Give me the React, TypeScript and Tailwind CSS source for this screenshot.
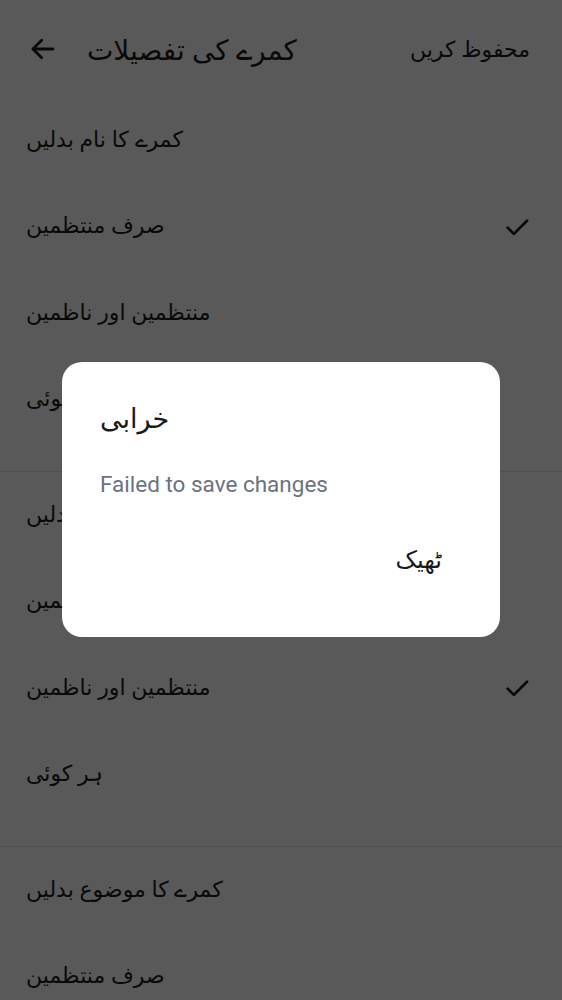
import React from 'react';

const urdu = { fontFamily: '"Noto Sans", "DejaVu Sans", sans-serif' };

interface OptionRowProps {
  label: string;
  checked?: boolean;
}

const Check = () => (
  <svg width="30" height="30" viewBox="0 0 24 24" fill="none" stroke="currentColor" strokeWidth="2.2" strokeLinecap="round" strokeLinejoin="round">
    <path d="M4.5 12.5l5 5L20 7" />
  </svg>
);

const OptionRow: React.FC<OptionRowProps> = ({ label, checked }) => (
  <div className="flex h-[86.5px] items-center justify-between pb-[4px] pl-[26px] pr-[30px]">
    <span className="text-[22px] text-[#1c1c1c]" style={urdu}>{label}</span>
    {checked && <span className="pt-[4px] text-[#1c1c1c]"><Check /></span>}
  </div>
);

const Section: React.FC<{ rows: OptionRowProps[]; last?: boolean }> = ({ rows, last }) => (
  <div className={last ? '' : 'border-b border-[#e2e2e2] pb-[28px]'}>
    {rows.map((r, i) => (
      <OptionRow key={i} {...r} />
    ))}
  </div>
);

export default function App() {
  return (
    <div className="relative h-[1000px] w-full overflow-hidden bg-white" dir="ltr">
      {/* top bar */}
      <div className="flex h-[97px] items-center justify-between pl-[27px] pr-[32px] text-[#1c1c1c]">
        <div className="flex items-center gap-[28px]">
          <svg width="32" height="32" viewBox="0 0 24 24" fill="none" stroke="currentColor" strokeWidth="2.1" strokeLinecap="round" strokeLinejoin="round">
            <path d="M19.5 12H4.5" />
            <path d="M11 5.5L4.5 12l6.5 6.5" />
          </svg>
          <span className="text-[28px]" style={urdu}>کمرے کی تفصیلات</span>
        </div>
        <span className="text-[22px]" style={urdu}>محفوظ کریں</span>
      </div>

      <Section
        rows={[
          { label: 'کمرے کا نام بدلیں' },
          { label: 'صرف منتظمین', checked: true },
          { label: 'منتظمین اور ناظمین' },
          { label: 'ہر کوئی' },
        ]}
      />
      <Section
        rows={[
          { label: 'کمرے کی تصویر بدلیں' },
          { label: 'صرف منتظمین' },
          { label: 'منتظمین اور ناظمین', checked: true },
          { label: 'ہر کوئی' },
        ]}
      />
      <Section
        last
        rows={[
          { label: 'کمرے کا موضوع بدلیں' },
          { label: 'صرف منتظمین' },
        ]}
      />

      {/* dim overlay + dialog */}
      <div className="absolute inset-0 flex items-start justify-center bg-black/65 pt-[362px]">
        <div className="flex h-[275px] w-[438px] flex-col rounded-[20px] bg-white px-[38px] pt-[36px]">
          <div className="text-[27px] leading-[40px] text-[#1a1a1a]" style={urdu}>خرابی</div>
          <div className="mt-[31px] text-[22.5px] leading-[30px] text-[#6b7280]" style={{ fontFamily: 'Roboto, sans-serif' }}>
            Failed to save changes
          </div>
          <div className="mt-[42px] flex justify-end pr-[20px]">
            <span className="text-[24px] leading-[36px] text-[#1a1a1a]" style={urdu}>ٹھیک</span>
          </div>
        </div>
      </div>
    </div>
  );
}
